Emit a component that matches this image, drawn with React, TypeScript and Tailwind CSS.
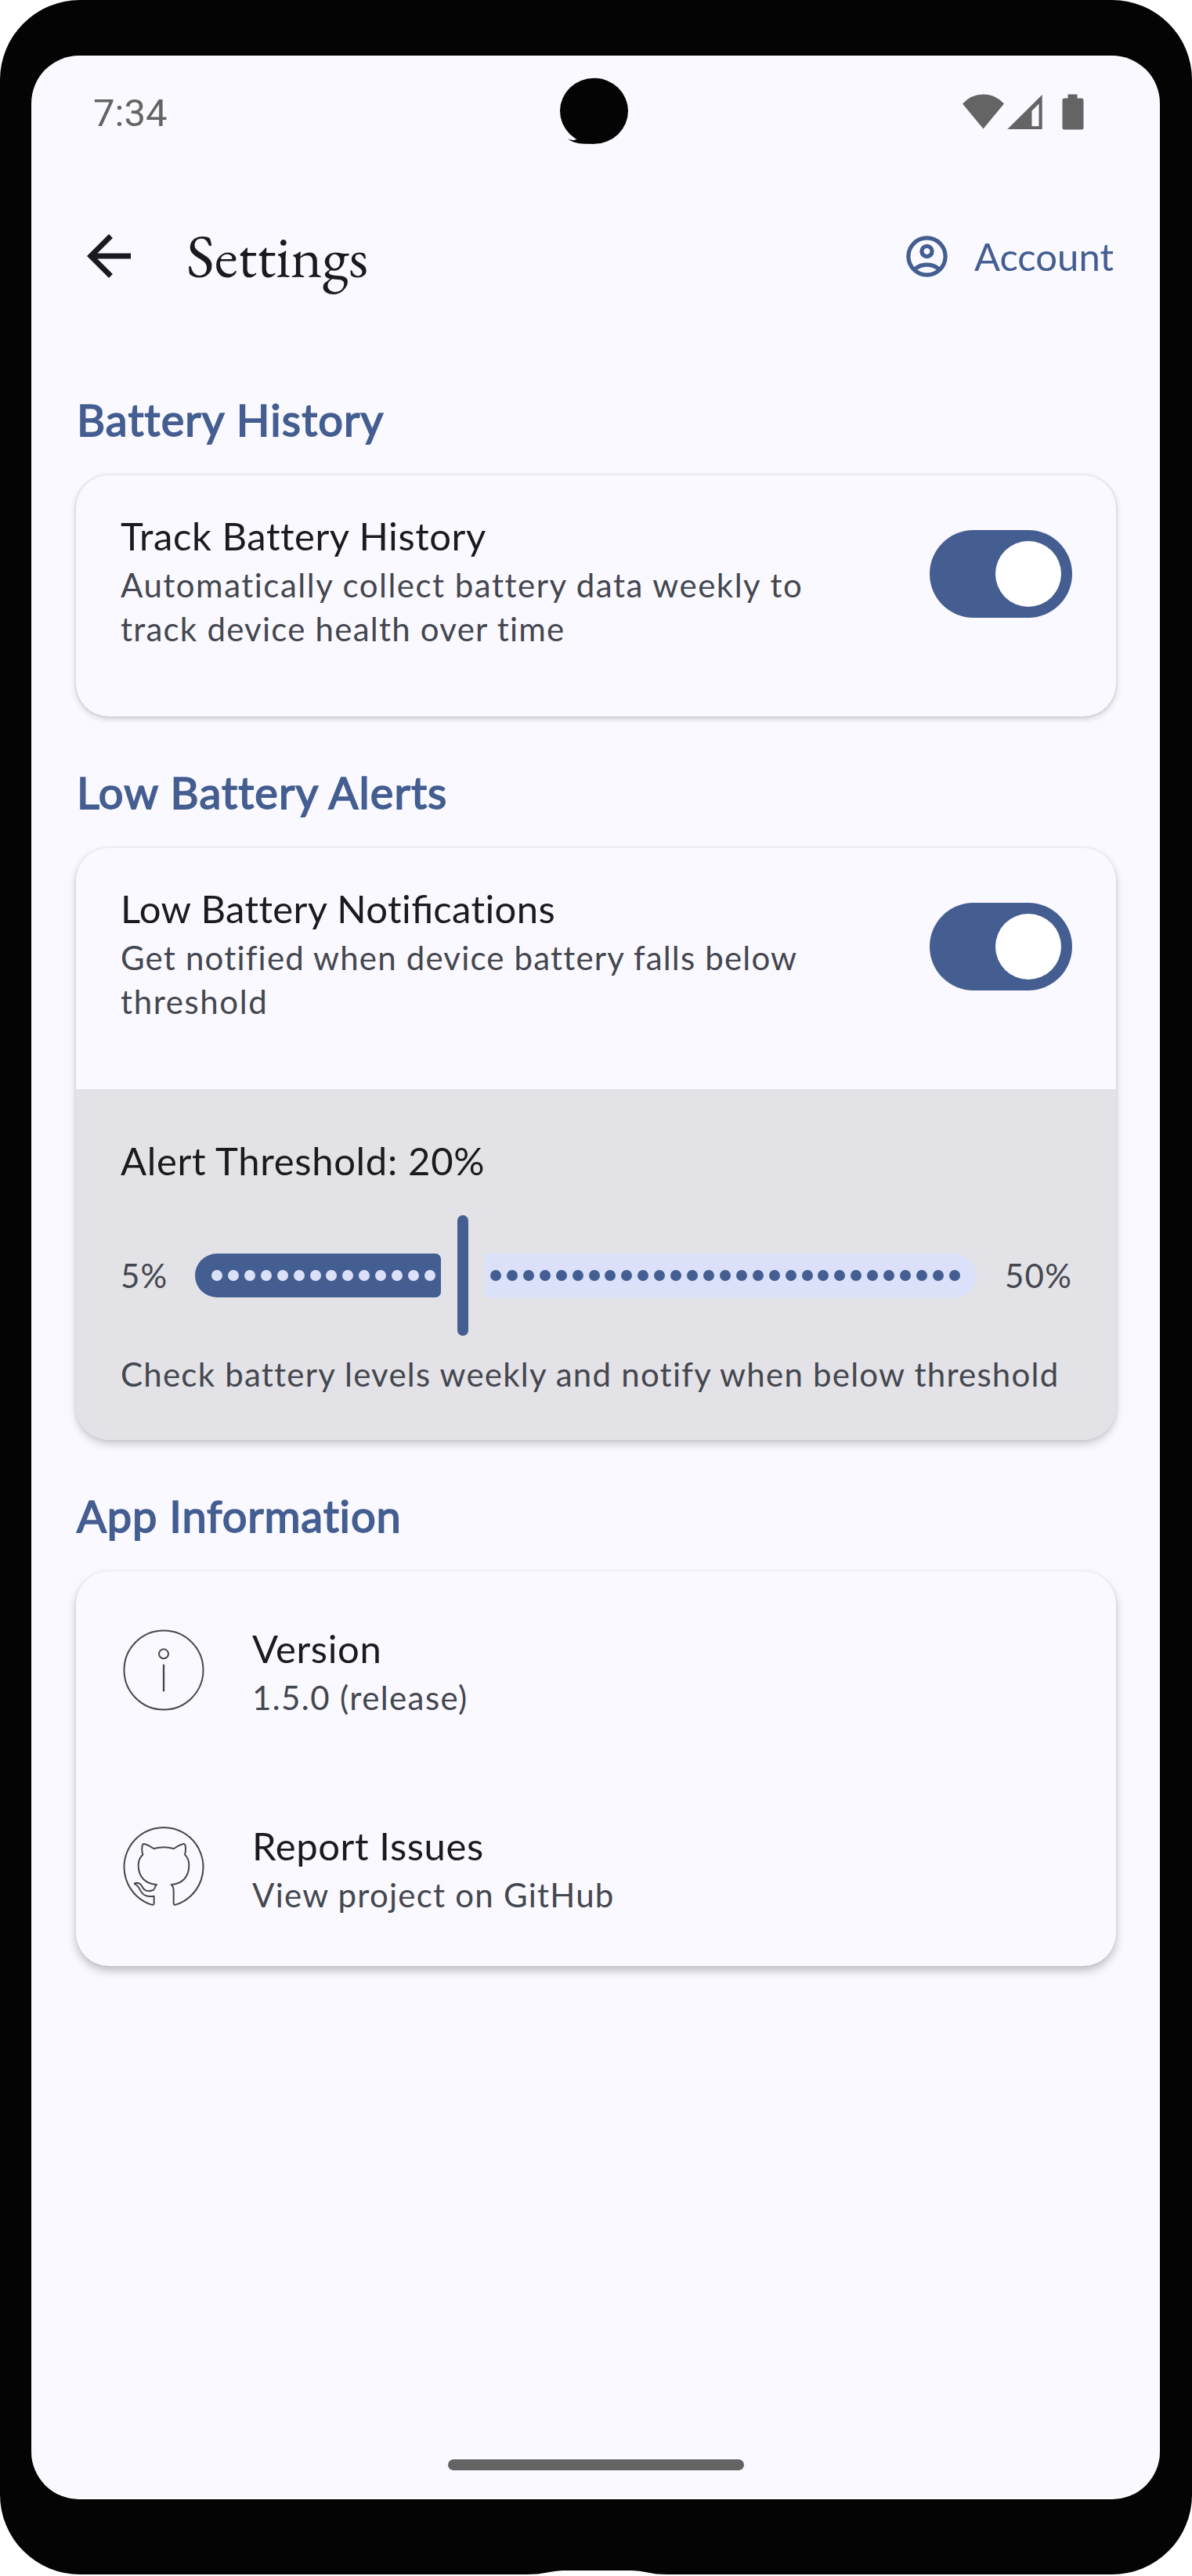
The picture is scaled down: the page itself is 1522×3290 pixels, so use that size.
import type { ReactNode } from 'react';

function StatusBar() {
  return (
    <div className="relative flex h-[140px] items-center justify-between pl-[78px] pr-[97px]">
      <span className="mt-2 font-['Roboto',sans-serif] text-[49px] leading-[58px] text-[#646464]">7:34</span>
      {/* camera cut-out */}
      <svg className="absolute left-[673px] top-[28px]" width="90" height="88" viewBox="0 0 90 88" fill="#040404">
        <ellipse cx="44.5" cy="42.7" rx="43.5" ry="42" />
        <path d="M10.5 78q6 3 10 1.500l24-6v11.200H34Q19 85 10.500 78z" />
      </svg>
      <svg className="mt-[3px]" width="155" height="46" viewBox="0 0 155 46" fill="#646464">
        <path d="M0 12.500Q11 .5 26.500 .5T53 12.500L26.500 44.500z" />
        <path d="M101.700 1v44H57.300zM97.500 12.500l-9 9v19.700h9z" fillRule="evenodd" />
        <path d="M134.500 .5h12v5h5.500q2.500 0 2.500 2.500v35q0 2.500-2.500 2.500h-22q-2.500 0-2.500-2.500v-35q0-2.500 2.500-2.500h4.500z" />
      </svg>
    </div>
  );
}

function TopBar() {
  return (
    <header className="mt-[46px] flex h-[140px] items-center justify-between pl-14 pr-[59px]">
      <div className="flex items-center">
        <svg width="84" height="84" viewBox="0 0 24 24" fill="#1a1b1f">
          <path d="M20 11H7.830l5.590-5.590L12 4l-8 8 8 8 1.410-1.410L7.830 13H20z" />
        </svg>
        <h1 className="ml-[57px] font-['EB_Garamond','Liberation_Serif',serif] text-[77px] leading-[98px] text-[#1a1b1f]">Settings</h1>
      </div>
      <div className="flex items-center gap-[29px] text-[#445e91]">
        <svg width="63" height="63" viewBox="0 -960 960 960" fill="currentColor">
          <path d="M234-276q51-39 114-61.500T480-360q69 0 132 22.500T726-276q35-41 54.500-93T800-480q0-133-93.500-226.500T480-800q-133 0-226.500 93.500T160-480q0 59 19.500 111t54.500 93Zm246-164q-59 0-99.500-40.500T340-580q0-59 40.500-99.500T480-720q59 0 99.500 40.500T620-580q0 59-40.500 99.500T480-440Zm0 360q-83 0-156-31.500T197-197q-54-54-85.500-127T80-480q0-83 31.500-156T197-763q54-54 127-85.500T480-880q83 0 156 31.500T763-763q54 54 85.500 127T880-480q0 83-31.500 156T763-197q-54 54-127 85.500T480-80Zm0-80q53 0 100-15.500t86-44.500q-39-29-86-44.500T480-280q-53 0-100 15.500T294-220q39 29 86 44.500T480-160Zm0-360q26 0 43-17t17-43q0-26-17-43t-43-17q-26 0-43 17t-17 43q0 26 17 43t43 17Z" />
        </svg>
        <span className="text-[49px] leading-[70px]">Account</span>
      </div>
    </header>
  );
}

function SectionTitle({ children }: { children: ReactNode }) {
  return (
    <h2 className="mb-[31px] pl-px text-[56px] leading-[81px] tracking-[1.1px] text-[#445e91] [-webkit-text-stroke:1.75px_#445e91]">
      {children}
    </h2>
  );
}

function Title({ children }: { children: ReactNode }) {
  return <div className="pl-px text-[49px] leading-[70px] tracking-[0.6px] text-[#1a1b1f]">{children}</div>;
}

function Detail({ children }: { children: ReactNode }) {
  return <div className="pl-px text-[42px] leading-[56px] tracking-[1.23px] text-[#44474f]">{children}</div>;
}

function Toggle() {
  return (
    <div className="mt-7 flex h-28 w-[182px] shrink-0 items-center justify-end rounded-full bg-[#445e91] pr-3.5">
      <div className="size-[84px] rounded-full bg-white" />
    </div>
  );
}

function ToggleRow({ title, children }: { title: ReactNode; children: ReactNode }) {
  return (
    <div className="flex h-[308px] justify-between px-14 pt-[42px]">
      <div>
        <Title>{title}</Title>
        <Detail>{children}</Detail>
      </div>
      <Toggle />
    </div>
  );
}

const ACTIVE_TICKS = Array.from({ length: 14 }, (_, i) => i);
const INACTIVE_TICKS = Array.from({ length: 29 }, (_, i) => i);

function ThresholdSlider() {
  return (
    <div className="mb-3.5 mt-7 flex h-[168px] items-center">
      <div className="w-24 shrink-0"><Detail>5%</Detail></div>
      <div className="flex h-14 w-[314px] shrink-0 items-center justify-between rounded-l-[28px] rounded-r-[7px] bg-[#445e91] pl-[21px] pr-[7px]">
        {ACTIVE_TICKS.map((i) => <span key={i} className="size-3.5 rounded-full bg-[#dbe1f9]" />)}
      </div>
      <div className="mx-[21px] h-[154px] w-3.5 shrink-0 rounded-full bg-[#445e91]" />
      <div className="flex h-14 w-[628px] shrink-0 items-center justify-between rounded-l-[7px] rounded-r-[28px] bg-[#dbe1f9] pl-[7px] pr-[21px]">
        {INACTIVE_TICKS.map((i) => <span key={i} className="size-3.5 rounded-full bg-[#445e91]" />)}
      </div>
      <div className="ml-[35px] shrink-0"><Detail>50%</Detail></div>
    </div>
  );
}

function InfoIcon() {
  return (
    <svg className="size-28" viewBox="39 51 336 336" fill="none" stroke="#44474f" strokeWidth="6" strokeLinecap="round">
      <circle cx="207" cy="219" r="151.500" />
      <circle cx="207" cy="157" r="18" />
      <path d="M207 200v98" strokeWidth="7" />
    </svg>
  );
}

function GitHubIcon() {
  return (
    <svg className="size-28" viewBox="39 807 336 336" fill="none" stroke="#44474f" strokeWidth="6" strokeLinejoin="round" strokeLinecap="round">
      <path d="M236 1041C275 1038 304 1015 304 966C304 950 299 937 288 926C292 912 292 900 289 889Q288 884 282 885C269 888 258 894 246 903Q207 893 169 903C157 894 145 888 133 885Q127 884 126 889C123 900 122 912 127 926C115 937 110 950 110 966C110 1015 140 1038 180 1041C172 1047 174 1061 165 1063C148 1068 135 1066 128 1054C121 1043 119 1035 104 1034Q94 1034 96 1039C105 1042 111 1050 116 1060C127 1083 143 1089 170 1085V1112Q170 1120 161 1118A151.500 151.500 0 1 1 253 1118Q245 1120 245 1112V1064C245 1053 241 1045 236 1041Z" />
    </svg>
  );
}

function InfoRow({ icon, title, detail }: { icon: ReactNode; title: string; detail: ReactNode }) {
  return (
    <div className="flex h-[252px] items-center gap-14 px-14">
      {icon}
      <div>
        <Title>{title}</Title>
        <Detail>{detail}</Detail>
      </div>
    </div>
  );
}

export default function App() {
  return (
    <div className="h-[3290px] w-[1522px] bg-white font-['Lato',sans-serif] [font-variant-ligatures:none]">
      <div className="relative h-[3288px] rounded-[102px] bg-[#040404] pl-10 pr-[41px] pt-[71px]">
        <div className="relative flex h-[3121px] flex-col rounded-[61px] border-b-2 border-white bg-[#faf9ff] pl-px">
          <StatusBar />
          <TopBar />

          <main className="px-14">
            <section className="mt-[98px]">
              <SectionTitle>Battery History</SectionTitle>
              <div className="rounded-[42px] bg-[#faf9ff] shadow-[0_3px_9px_rgba(0,0,0,0.18),0_0_4px_rgba(0,0,0,0.1)]">
                <ToggleRow title={<span className="tracking-[0.55px]">Track Battery History</span>}>
                  <span className="tracking-[1.5px]">Automatically collect battery data weekly to</span>
                  <br />
                  track device health over time
                </ToggleRow>
              </div>
            </section>

            <section className="mt-14">
              <SectionTitle>Low Battery Alerts</SectionTitle>
              <div className="overflow-hidden rounded-[42px] bg-[#faf9ff] shadow-[0_5px_11px_rgba(0,0,0,0.2),0_0_4px_rgba(0,0,0,0.08)]">
                <ToggleRow
                  title={
                    <span className="tracking-[0.4px]">
                      Low Battery Noti
                      <span className="tracking-[0px] [font-variant-ligatures:common-ligatures]">fi</span>
                      cations
                    </span>
                  }
                >
                  <span className="tracking-[1.18px]">Get notified when device battery falls below</span>
                  <br />
                  <span className="tracking-[1.6px]">threshold</span>
                </ToggleRow>
                <div className="h-[448px] bg-[#e3e2e6] px-14 pt-14">
                  <Title><span className="tracking-[0.67px]">Alert Threshold: 20%</span></Title>
                  <ThresholdSlider />
                  <Detail>Check battery levels weekly and notify when below threshold</Detail>
                </div>
              </div>
            </section>

            <section className="mt-14">
              <SectionTitle><span className="tracking-[0.85px]">App Information</span></SectionTitle>
              <div className="rounded-[42px] bg-[#faf9ff] shadow-[0_6px_12px_rgba(0,0,0,0.24),0_0_4px_rgba(0,0,0,0.06)]">
                <InfoRow icon={<InfoIcon />} title="Version" detail={<span className="tracking-[1.4px]">1.5.0 (release)</span>} />
                <InfoRow icon={<GitHubIcon />} title="Report Issues" detail="View project on GitHub" />
              </div>
            </section>
          </main>

          <div className="mb-[35px] mt-auto h-3.5 w-[378px] self-center rounded-full bg-[#646464]" />
        </div>
        {/* notch in the lower edge of the frame */}
        <svg className="absolute bottom-0 left-[673px]" width="179" height="5" viewBox="0 0 179 5" fill="#fff">
          <path d="M0 5Q14 5 26 2.500T46 0h88q10 0 20 2.500T179 5z" />
        </svg>
      </div>
    </div>
  );
}
